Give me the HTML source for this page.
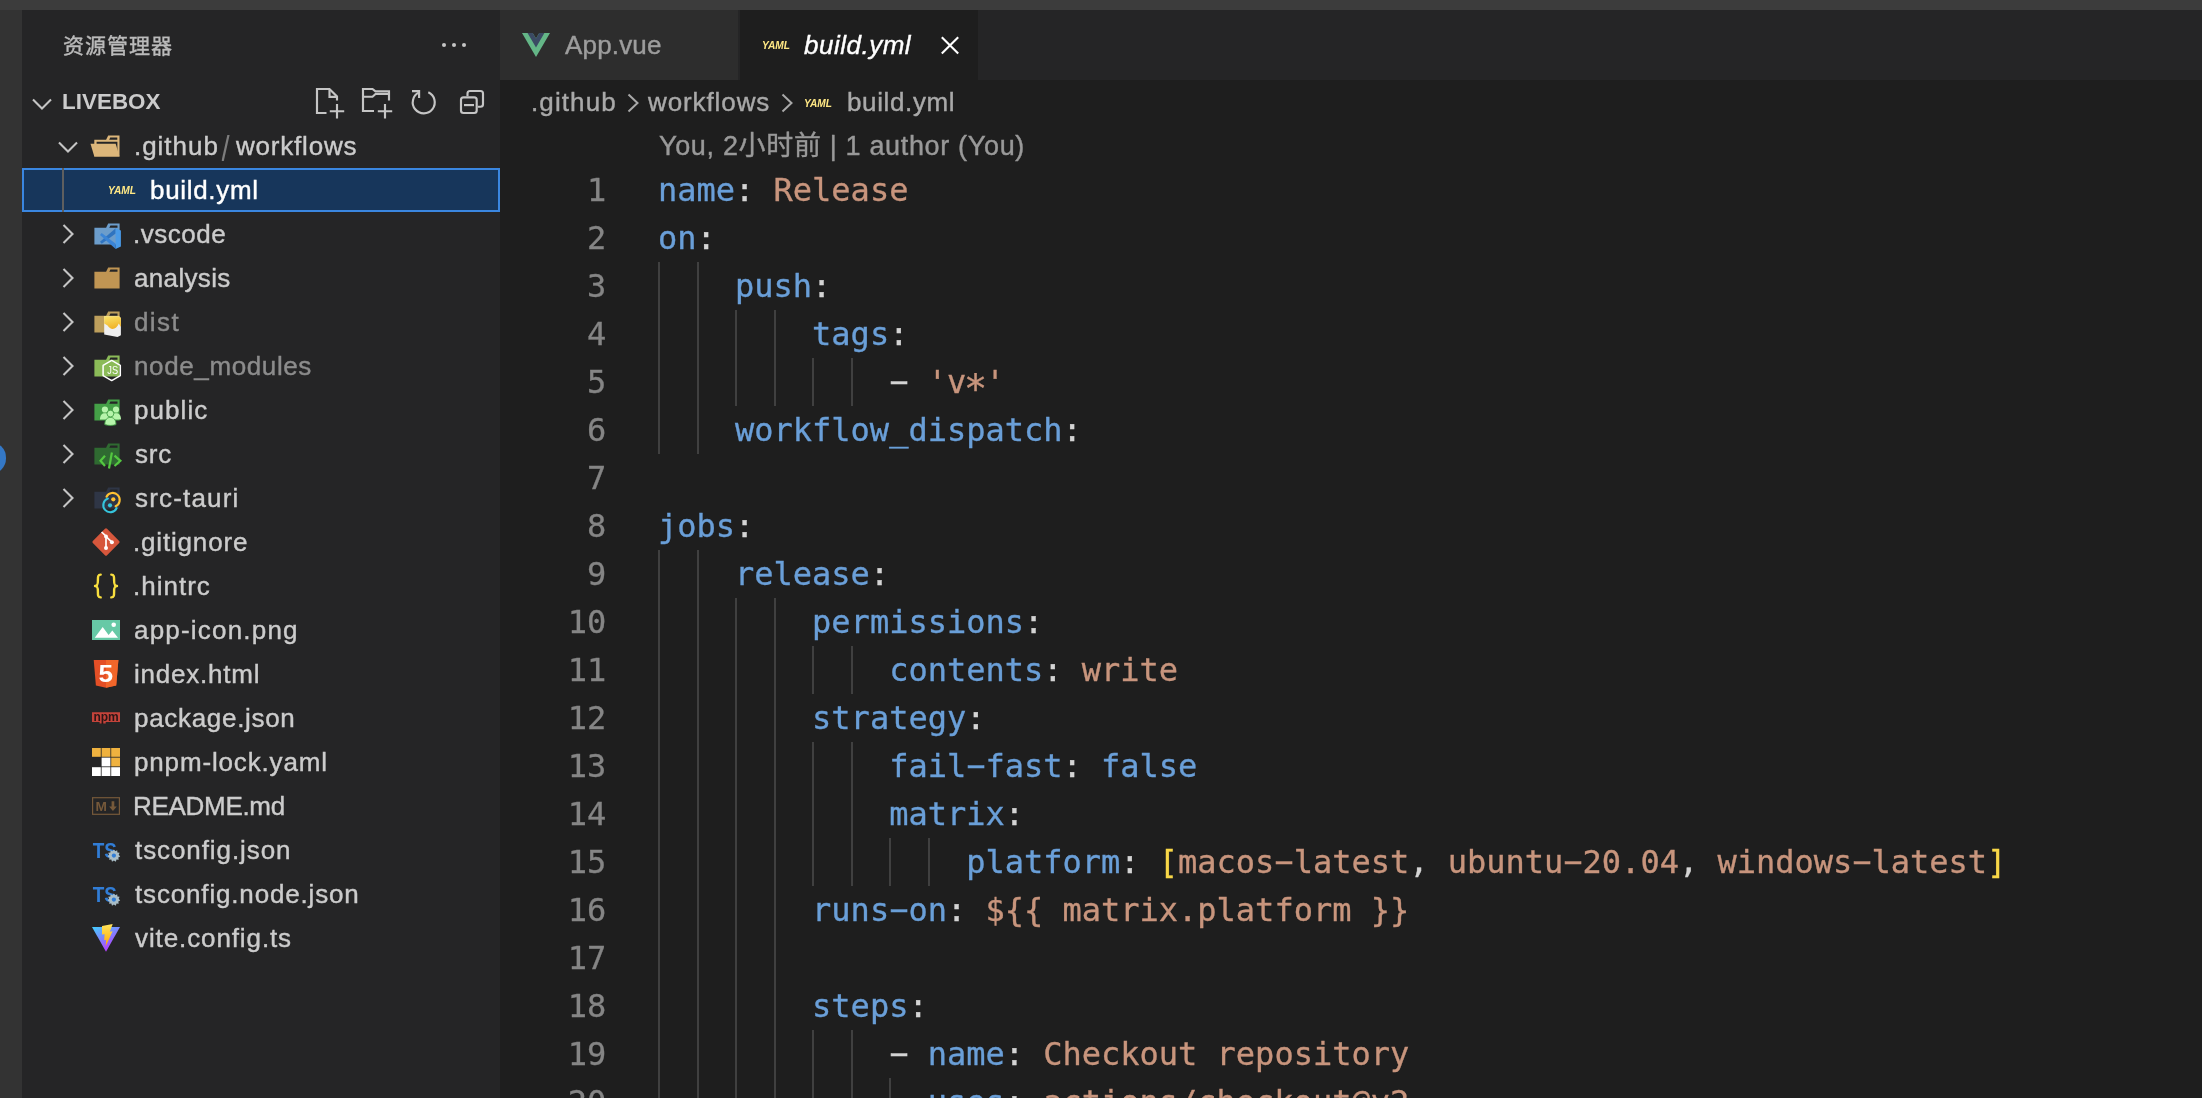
<!DOCTYPE html><html lang="zh-CN"><head><meta charset="utf-8"><title>build.yml — livebox</title><style>
*{box-sizing:border-box}
html,body{margin:0;padding:0}
body{width:2202px;height:1098px;overflow:hidden;position:relative;background:#1e1e1e;font-family:"Liberation Sans","Noto Sans CJK SC",sans-serif;color:#cccccc;-webkit-font-smoothing:antialiased}
.abs{position:absolute}
.t{position:absolute;white-space:pre;line-height:1;will-change:transform;-webkit-text-stroke:0.4px}
.row{position:absolute;left:22px;width:478px;height:44px}
.lbl{-webkit-text-stroke:0.4px;will-change:transform;position:absolute;top:0;height:44px;line-height:44px;font-size:26px;white-space:pre;color:#cccccc}
.dim{color:#8c8c8c}
.ic{will-change:transform;position:absolute;width:32px;height:32px;overflow:visible}
.code{-webkit-text-stroke:0.35px;will-change:transform;position:absolute;left:658px;height:48px;line-height:48px;font-family:"DejaVu Sans Mono","Liberation Mono",monospace;font-size:32px;white-space:pre;color:#d4d4d4;letter-spacing:-0.005px}
.ln{-webkit-text-stroke:0.3px;will-change:transform;position:absolute;left:520px;width:86.3px;height:48px;line-height:48px;text-align:right;font-family:"DejaVu Sans Mono","Liberation Mono",monospace;font-size:32px;color:#858585}
.k{color:#6a9fd8}.s{color:#c8957d}.b{color:#f8d748}.p{color:#d4d4d4}
.h{display:inline-block;transform:translate(0.4px,-0.8px) scaleX(1.95)}.a{display:inline-block;transform:translateY(7.2px) scale(1.2)}
.g{position:absolute;width:2px;background:#404040}
</style></head><body>
<div class="abs" style="left:0;top:0;width:2202px;height:10px;background:#3c3c3c"></div>
<div class="abs" style="left:0;top:10px;width:22px;height:1088px;background:#333333;overflow:hidden"><div class="abs" style="left:-25.2px;top:432.35px;width:31.3px;height:31.3px;border-radius:50%;background:#3478c6"></div></div>
<div class="abs" style="left:22px;top:10px;width:478px;height:1088px;background:#252526"></div>
<div class="abs" style="left:500px;top:10px;width:1702px;height:70px;background:#252526"></div>
<div class="abs" style="left:500px;top:10px;width:238px;height:70px;background:#2d2d2d"></div>
<div class="abs" style="left:740px;top:10px;width:238px;height:70px;background:#1e1e1e"></div>
<div class="t" id="title" style="left:62.500px;top:34.500px;font-size:21px;letter-spacing:1px;color:#bbbbbb;">资源管理器</div>
<svg class="abs" style="left:438px;top:29px" width="32" height="32" viewBox="0 0 32 32"><circle cx="6" cy="16" r="2.050" fill="#c5c5c5"/><circle cx="16" cy="16" r="2.050" fill="#c5c5c5"/><circle cx="26" cy="16" r="2.050" fill="#c5c5c5"/></svg>
<svg class="ic" style="left:26px;top:87.5px" viewBox="0 0 32 32"><polyline points="7,11.500 16,20.500 25,11.500" fill="none" stroke="#c5c5c5" stroke-width="2.100"/></svg>
<div class="t" id="livebox" style="left:62px;top:90.5px;font-size:22.4px;-webkit-text-stroke:0;font-weight:700;color:#cccccc;letter-spacing:0.033px;margin-left:-0.20px;">LIVEBOX</div>
<svg class="abs" style="left:300px;top:76px" width="200" height="52" viewBox="300 76 200 52" fill="none" stroke="#c5c5c5" stroke-width="2.150">
<path d="M326.500,113H317V89H329.500L337,96.500V100.500"/><path d="M329.500,89V96.800H337"/><path d="M337,104V118.500M329.800,111.200H344.200"/>
<path d="M374,111H363V89H372.500L375.500,91.400H389V100.500"/><path d="M363,96.700H372.500L375.500,94H389"/><path d="M385,104V118.500M377.800,111.200H392.200"/>
<path d="M419,92.400A11,11 0 1 0 428.300,92.300"/><path d="M412,91.100H419.100V98"/>
<path d="M467.5,96.3V93.5a2.500,2.500 0 0 1 2.5,-2.5h10.500a2.500,2.500 0 0 1 2.5,2.5v10.700a2.500,2.500 0 0 1 -2.5,2.5H477.800"/><rect x="461" y="97.300" width="15.700" height="15.700" rx="2.500"/><path d="M464,105.100H474"/>
</svg>
<svg class="ic" style="left:52px;top:130.5px" viewBox="0 0 32 32"><polyline points="7,11.500 16,20.500 25,11.500" fill="none" stroke="#c5c5c5" stroke-width="2.100"/></svg>
<svg class="ic" style="left:90px;top:130px" viewBox="0 0 32 32"><path d="M27.4,5.5H18.2L16.1,9.7H4.3V26.5H29.5V5.5Zm0,18.7H6.6V11.8H27.4Zm0-14.5H19.2l1-2.1h7.1V9.7Z" fill="#dcb67a"/><polygon points="25.7 13.7 0.5 13.7 4.3 26.5 29.5 26.5 25.7 13.7" fill="#dcb67a"/></svg>
<div class="lbl" id="r0a" style="left:134px;top:124px;letter-spacing:0.967px;margin-left:-0.20px;">.github</div>
<div class="lbl" id="r0s" style="left:222px;top:128.5px;color:#7d7d7d;-webkit-text-stroke:0;transform:scale(1.12,1.34);transform-origin:50% 63%;">/</div>
<div class="lbl" id="r0b" style="left:234px;top:124px;letter-spacing:0.800px;margin-left:1.60px;">workflows</div>
<div class="abs" style="left:22px;top:168px;width:478px;height:44px;background:#17365b;border:2px solid #3a86e0"></div>
<div class="abs" style="left:62px;top:168px;width:2px;height:44px;background:#5f5f5f"></div>
<svg class="ic" style="left:106px;top:174px" viewBox="0 0 32 32"><text x="2" y="19.8" font-family='"Liberation Sans",sans-serif' font-size="10.6" font-weight="700" font-style="italic" fill="#ffe885" textLength="28" lengthAdjust="spacingAndGlyphs">YAML</text></svg>
<div class="lbl" id="r1" style="left:150px;top:168px;color:#ffffff;letter-spacing:0.675px;margin-left:0.00px;">build.yml</div>
<svg class="ic" style="left:52px;top:218px" viewBox="0 0 32 32"><polyline points="11.500,7 20.500,16 11.500,25" fill="none" stroke="#c5c5c5" stroke-width="2.100"/></svg>
<svg class="ic" style="left:90px;top:218px" viewBox="0 0 32 32"><path d="M27.5,5.5H18.2L16.1,9.7H4.4V26.5H29.6V5.5Zm0,4.2H19.3l1.1-2.1h7.1Z" fill="#6c9dcb"/><polygon points="10,23.7 11.7,25.8 25.7,15.4 25.7,10.2" fill="#2f74c0"/><polygon points="10,17 11.7,14.9 25.7,25.8 25.7,31" fill="#3a84d6"/><polygon points="25.6,10.2 30.9,12.6 30.9,28.4 25.6,31" fill="#4a9be8"/></svg>
<div class="lbl" id="r2" style="left:134px;top:212px;letter-spacing:0.533px;margin-left:-0.80px;">.vscode</div>
<svg class="ic" style="left:52px;top:262px" viewBox="0 0 32 32"><polyline points="11.500,7 20.500,16 11.500,25" fill="none" stroke="#c5c5c5" stroke-width="2.100"/></svg>
<svg class="ic" style="left:90px;top:262px" viewBox="0 0 32 32"><path d="M27.5,5.5H18.2L16.1,9.7H4.4V26.5H29.6V5.5Zm0,4.2H19.3l1.1-2.1h7.1Z" fill="#c09553"/></svg>
<div class="lbl" id="r3" style="left:134px;top:256px;letter-spacing:0.343px;margin-left:-0.20px;">analysis</div>
<svg class="ic" style="left:52px;top:306px" viewBox="0 0 32 32"><polyline points="11.500,7 20.500,16 11.500,25" fill="none" stroke="#c5c5c5" stroke-width="2.100"/></svg>
<svg class="ic" style="left:90px;top:306px" viewBox="0 0 32 32"><path d="M27.5,5.5H18.2L16.1,9.7H4.4V26.5H29.6V5.5Zm0,4.2H19.3l1.1-2.1h7.1Z" fill="#bd9f5c"/><defs><linearGradient id="bagg" x1="0" y1="0" x2="0.3" y2="1"><stop offset="0" stop-color="#fbe56c"/><stop offset="1" stop-color="#f0b429"/></linearGradient></defs><polygon points="14.2,10.2 29,10.2 30.9,12 30.9,29.2 27.5,31 14.2,28.6" fill="#efefef"/><path d="M14.2,10.2H29L30.9,12V21L28.8,17.5C26.5,23.5 21,25 17.6,19.5L14.2,17.4Z" fill="url(#bagg)"/></svg>
<div class="lbl dim" id="r4" style="left:134px;top:300px;letter-spacing:1.400px;margin-left:-0.20px;">dist</div>
<svg class="ic" style="left:52px;top:350px" viewBox="0 0 32 32"><polyline points="11.500,7 20.500,16 11.500,25" fill="none" stroke="#c5c5c5" stroke-width="2.100"/></svg>
<svg class="ic" style="left:90px;top:350px" viewBox="0 0 32 32"><path d="M27.5,5.5H18.2L16.1,9.7H4.4V26.5H29.6V5.5Zm0,4.2H19.3l1.1-2.1h7.1Z" fill="#8bbb58"/><polygon points="21.7,10.4 30.3,15.4 30.3,25.6 21.7,30.6 13.1,25.6 13.1,15.4" fill="none" stroke="#ffffff" stroke-width="1.5" stroke-linejoin="round"/><text x="17.3" y="24.4" font-family='"Liberation Sans",sans-serif' font-size="10.5" font-weight="400" fill="#ffffff" textLength="10.8" lengthAdjust="spacingAndGlyphs">JS</text></svg>
<div class="lbl dim" id="r5" style="left:134px;top:344px;letter-spacing:0.618px;margin-left:0.00px;">node_modules</div>
<svg class="ic" style="left:52px;top:394px" viewBox="0 0 32 32"><polyline points="11.500,7 20.500,16 11.500,25" fill="none" stroke="#c5c5c5" stroke-width="2.100"/></svg>
<svg class="ic" style="left:90px;top:394px" viewBox="0 0 32 32"><path d="M27.5,5.5H18.2L16.1,9.7H4.4V26.5H29.6V5.5Zm0,4.2H19.3l1.1-2.1h7.1Z" fill="#44a047"/><g fill="#b6f5ab"><circle cx="14.9" cy="15.5" r="3.1"/><circle cx="26" cy="15.5" r="3.1"/><path d="M10,25.5c0-4.5,2-6.3,5-6.3s5,1.8,5,6.3z"/><path d="M21,25.5c0-4.5,2-6.3,5-6.3s5,1.8,5,6.3z"/></g><g fill="#b6f5ab" stroke="#44a047" stroke-width="0.9"><circle cx="20.4" cy="19.6" r="3.4"/><path d="M14.8,30.6c0-5,2.3-7.2,5.6-7.2s5.600,2.2,5.6,7.2c-3,1.100-8.2,1.100-11.2,0z"/></g></svg>
<div class="lbl" id="r6" style="left:134px;top:388px;letter-spacing:1.080px;margin-left:0.00px;">public</div>
<svg class="ic" style="left:52px;top:438px" viewBox="0 0 32 32"><polyline points="11.500,7 20.500,16 11.500,25" fill="none" stroke="#c5c5c5" stroke-width="2.100"/></svg>
<svg class="ic" style="left:90px;top:438px" viewBox="0 0 32 32"><path d="M27.5,5.5H18.2L16.1,9.7H4.4V26.5H29.6V5.5Zm0,4.2H19.3l1.1-2.1h7.1Z" fill="#2f6a31"/><g fill="none" stroke="#54c840" stroke-width="2.2"><polyline points="15,17.7 10.5,22.8 15,28"/><polyline points="24.5,17.7 30.4,22.8 24.5,28"/><line x1="21.9" y1="14.5" x2="19" y2="30.5"/></g></svg>
<div class="lbl" id="r7" style="left:134px;top:432px;letter-spacing:0.800px;margin-left:0.80px;">src</div>
<svg class="ic" style="left:52px;top:482px" viewBox="0 0 32 32"><polyline points="11.500,7 20.500,16 11.500,25" fill="none" stroke="#c5c5c5" stroke-width="2.100"/></svg>
<svg class="ic" style="left:90px;top:482px" viewBox="0 0 32 32"><path d="M27.5,5.5H18.2L16.1,9.7H4.4V26.5H29.6V5.5Zm0,4.2H19.3l1.1-2.1h7.1Z" fill="#2f3646"/><g fill="none" stroke-width="2.1" stroke-linecap="round"><path d="M16.5,14.7A7,7 0 1 1 25.6,24.300" stroke="#ffc131"/><path d="M17.9,16.600A7,7 0 1 0 26.600,26.200" stroke="#35c4dc"/></g><circle cx="23.3" cy="17.3" r="2.1" fill="#ffc131"/><circle cx="20" cy="23.3" r="2.1" fill="#35c4dc"/></svg>
<div class="lbl" id="r8" style="left:134px;top:476px;letter-spacing:1.175px;margin-left:0.80px;">src-tauri</div>
<svg class="ic" style="left:90px;top:526px" viewBox="0 0 32 32"><rect x="5.95" y="5.95" width="20.1" height="20.1" rx="1.5" transform="rotate(45 16 16)" fill="#d6573c"/><g stroke="#ffffff" stroke-width="1.7" fill="none"><line x1="11.6" y1="6" x2="16" y2="10.2"/><line x1="16" y1="10.2" x2="16" y2="21.9"/><line x1="16" y1="10.6" x2="21.9" y2="16.2"/></g><circle cx="16" cy="10.400" r="1.9" fill="#ffffff"/><circle cx="16" cy="21.9" r="2" fill="#ffffff"/><circle cx="21.9" cy="16.2" r="2" fill="#ffffff"/></svg>
<div class="lbl" id="r9" style="left:134px;top:520px;letter-spacing:0.822px;margin-left:-0.80px;">.gitignore</div>
<svg class="ic" style="left:90px;top:570px" viewBox="0 0 32 32"><g fill="none" stroke="#f8de3e" stroke-width="2.4" stroke-linecap="round" stroke-linejoin="round"><path d="M10.7,4.6C7.7,4.6,7.9,7,7.9,10.5S7.7,16,5,16C7.7,16,7.9,18,7.9,21.500S7.7,27.400,10.7,27.4"/><path d="M21.3,4.6C24.3,4.6,24.1,7,24.1,10.5S24.3,16,27,16C24.3,16,24.1,18,24.1,21.500S24.3,27.400,21.300,27.4"/></g></svg>
<div class="lbl" id="r10" style="left:134px;top:564px;letter-spacing:1.000px;margin-left:-0.80px;">.hintrc</div>
<svg class="ic" style="left:90px;top:614px" viewBox="0 0 32 32"><rect x="2" y="6" width="28" height="20" fill="#67c9a6"/><polygon points="4.7,23.8 12.7,12.9 18.6,21 22.3,16.6 28,23.8" fill="#ffffff"/><circle cx="23.7" cy="10.7" r="2.3" fill="#ffffff"/></svg>
<div class="lbl" id="r11" style="left:134px;top:608px;letter-spacing:1.200px;margin-left:-0.20px;">app-icon.png</div>
<svg class="ic" style="left:90px;top:658px" viewBox="0 0 32 32"><polygon points="3.7,2 28.4,2 26.2,27.400 16,29.8 5.9,27.4" fill="#e44f26"/><polygon points="16,2 28.4,2 26.2,27.4 16,29.8" fill="#f1662a"/><text x="8.5" y="23.6" font-family='"Liberation Sans",sans-serif' font-size="23.5" font-weight="700" fill="#ffffff" textLength="14.6" lengthAdjust="spacingAndGlyphs">5</text></svg>
<div class="lbl" id="r12" style="left:134px;top:652px;letter-spacing:0.778px;margin-left:0.40px;">index.html</div>
<svg class="ic" style="left:90px;top:702px" viewBox="0 0 32 32"><path d="M2,10.2H30V19.900H15.7V21.5H9.6V19.900H2Z" fill="#c4433a"/><text x="3.4" y="18.7" font-family='"Liberation Sans",sans-serif' font-size="13.5" font-weight="700" fill="#2a1616" textLength="25.3" lengthAdjust="spacingAndGlyphs">npm</text></svg>
<div class="lbl" id="r13" style="left:134px;top:696px;letter-spacing:0.691px;margin-left:0.00px;">package.json</div>
<svg class="ic" style="left:90px;top:746px" viewBox="0 0 32 32"><rect x="2" y="2" width="8.8" height="8.8" fill="#efb23f"/><rect x="11.6" y="2" width="8.8" height="8.8" fill="#efb23f"/><rect x="21.2" y="2" width="8.8" height="8.8" fill="#efb23f"/><rect x="21.2" y="11.6" width="8.8" height="8.8" fill="#efb23f"/><rect x="11.6" y="11.6" width="8.8" height="8.8" fill="#ffffff"/><rect x="2" y="21.2" width="8.8" height="8.8" fill="#ffffff"/><rect x="11.6" y="21.2" width="8.8" height="8.8" fill="#ffffff"/><rect x="21.2" y="21.2" width="8.8" height="8.8" fill="#ffffff"/></svg>
<div class="lbl" id="r14" style="left:134px;top:740px;letter-spacing:0.846px;margin-left:0.00px;">pnpm-lock.yaml</div>
<svg class="ic" style="left:90px;top:790px" viewBox="0 0 32 32"><rect x="2.6" y="7.7" width="26.8" height="16.6" fill="none" stroke="#76593a" stroke-width="1.2"/><text x="5.6" y="21" font-family='"Liberation Sans",sans-serif' font-size="13.7" font-weight="700" fill="#76593a" textLength="11.4" lengthAdjust="spacingAndGlyphs">M</text><path d="M21.6,11.2h2.7v5.2h2.5l-3.85,4.7l-3.85,-4.7h2.5z" fill="#76593a"/></svg>
<div class="lbl" id="r15" style="left:134px;top:784px;letter-spacing:-0.300px;margin-left:-0.80px;">README.md</div>
<svg class="ic" style="left:90px;top:834px" viewBox="0 0 32 32"><text x="2.7" y="24.3" font-family='"Liberation Sans",sans-serif' font-size="22.6" font-weight="700" fill="#317dd6" textLength="24.2" lengthAdjust="spacingAndGlyphs">TS</text><g transform="translate(23.9 21.6)"><path d="M0,-6.2 L1.3,-4.4 L3.3,-5.3 L3.5,-3.1 L5.7,-2.8 L4.8,-0.8 L6.3,0.8 L4.4,1.9 L4.8,4.1 L2.6,4 L1.900,6.100 L0,5 L-1.9,6.1 L-2.6,4 L-4.8,4.1 L-4.4,1.9 L-6.3,0.8 L-4.8,-0.8 L-5.7,-2.8 L-3.5,-3.1 L-3.3,-5.3 L-1.3,-4.4Z" fill="#a9bdc7"/><circle r="2.1" fill="#317dd6"/></g></svg>
<div class="lbl" id="r16" style="left:134px;top:828px;letter-spacing:0.917px;margin-left:0.80px;">tsconfig.json</div>
<svg class="ic" style="left:90px;top:878px" viewBox="0 0 32 32"><text x="2.7" y="24.3" font-family='"Liberation Sans",sans-serif' font-size="22.6" font-weight="700" fill="#317dd6" textLength="24.2" lengthAdjust="spacingAndGlyphs">TS</text><g transform="translate(23.9 21.6)"><path d="M0,-6.2 L1.3,-4.4 L3.3,-5.3 L3.5,-3.1 L5.7,-2.8 L4.8,-0.8 L6.3,0.8 L4.4,1.9 L4.8,4.1 L2.6,4 L1.900,6.100 L0,5 L-1.9,6.1 L-2.6,4 L-4.8,4.1 L-4.4,1.9 L-6.3,0.8 L-4.8,-0.8 L-5.7,-2.8 L-3.5,-3.1 L-3.3,-5.3 L-1.3,-4.4Z" fill="#a9bdc7"/><circle r="2.1" fill="#317dd6"/></g></svg>
<div class="lbl" id="r17" style="left:134px;top:872px;letter-spacing:0.835px;margin-left:0.80px;">tsconfig.node.json</div>
<svg class="ic" style="left:90px;top:922px" viewBox="0 0 32 32"><defs><linearGradient id="vg1" x1="0" y1="0" x2="0.6" y2="1"><stop offset="0" stop-color="#41d1ff"/><stop offset="1" stop-color="#bd34fe"/></linearGradient><linearGradient id="vg2" x1="0" y1="0" x2="0" y2="1"><stop offset="0" stop-color="#ffe45c"/><stop offset="1" stop-color="#ffa800"/></linearGradient></defs><polygon points="2,5 30,5 16,29.8" fill="url(#vg1)"/><polygon points="22.7,2 12,4 12,12.6 14.6,12.2 14.2,18.2 16.2,17.8 15.6,24.5 22.6,9.2 19.8,9.7" fill="url(#vg2)"/></svg>
<div class="lbl" id="r18" style="left:134px;top:916px;letter-spacing:0.892px;margin-left:0.80px;">vite.config.ts</div>
<svg class="ic" style="left:520px;top:29px" viewBox="0 0 32 32"><path d="M24.4,3.925H30L16,28.075,2,3.925H12.71L16,9.525l3.22-5.6Z" fill="#64b687"/><path d="M7.53,3.925,16,18.485l8.4-14.56H19.22L16,9.525l-3.29-5.6Z" fill="#3b4a63"/></svg>
<div class="t" id="tab1" style="left:564px;top:32px;font-size:26px;color:#9d9d9d;letter-spacing:0.167px;margin-left:1.00px;">App.vue</div>
<svg class="ic" style="left:760px;top:29px" viewBox="0 0 32 32"><text x="2" y="19.8" font-family='"Liberation Sans",sans-serif' font-size="10.6" font-weight="700" font-style="italic" fill="#ffe885" textLength="28" lengthAdjust="spacingAndGlyphs">YAML</text></svg>
<div class="t" id="tab2" style="left:803px;top:32px;font-size:26px;font-style:italic;color:#ffffff;letter-spacing:0.500px;margin-left:1.00px;">build.yml</div>
<svg class="abs" style="left:934px;top:29px" width="32" height="32" viewBox="0 0 32 32"><path d="M7.800,8.200L24.200,24.600M24.200,8.200L7.800,24.600" stroke="#ffffff" stroke-width="2.100" fill="none"/></svg>
<div class="t" id="bc1" style="left:532px;top:89px;font-size:26px;color:#a9a9a9;letter-spacing:1.100px;margin-left:-0.60px;">.github</div>
<svg class="abs" style="left:617px;top:86.500px" width="32" height="32" viewBox="0 0 32 32"><polyline points="11.500,7.500 20.500,16 11.500,24.500" fill="none" stroke="#a9a9a9" stroke-width="2"/></svg>
<div class="t" id="bc2" style="left:648px;top:89px;font-size:26px;color:#a9a9a9;letter-spacing:0.900px;margin-left:0.40px;">workflows</div>
<svg class="abs" style="left:771px;top:86.500px" width="32" height="32" viewBox="0 0 32 32"><polyline points="11.500,7.500 20.500,16 11.500,24.500" fill="none" stroke="#a9a9a9" stroke-width="2"/></svg>
<svg class="ic" style="left:802px;top:87px" viewBox="0 0 32 32"><text x="2" y="19.8" font-family='"Liberation Sans",sans-serif' font-size="10.6" font-weight="700" font-style="italic" fill="#ffe885" textLength="28" lengthAdjust="spacingAndGlyphs">YAML</text></svg>
<div class="t" id="bc3" style="left:846px;top:89px;font-size:26px;color:#a9a9a9;letter-spacing:0.625px;margin-left:0.60px;">build.yml</div>
<div class="t" id="lens" style="left:658px;top:133px;font-size:27px;color:#999999;letter-spacing:0.664px;margin-left:1.40px;">You, 2小时前 | 1 author (You)</div>
<div class="ln" style="top:166px">1</div>
<div class="code" style="top:166px"><span class="k">name</span>: <span class="s">Release</span></div>
<div class="ln" style="top:214px">2</div>
<div class="code" style="top:214px"><span class="k">on</span>:</div>
<div class="ln" style="top:262px">3</div>
<div class="g" style="left:658.00px;top:262px;height:48px"></div>
<div class="g" style="left:696.53px;top:262px;height:48px"></div>
<div class="code" style="top:262px">    <span class="k">push</span>:</div>
<div class="ln" style="top:310px">4</div>
<div class="g" style="left:658.00px;top:310px;height:48px"></div>
<div class="g" style="left:696.53px;top:310px;height:48px"></div>
<div class="g" style="left:735.06px;top:310px;height:48px"></div>
<div class="g" style="left:773.60px;top:310px;height:48px"></div>
<div class="code" style="top:310px">        <span class="k">tags</span>:</div>
<div class="ln" style="top:358px">5</div>
<div class="g" style="left:658.00px;top:358px;height:48px"></div>
<div class="g" style="left:696.53px;top:358px;height:48px"></div>
<div class="g" style="left:735.06px;top:358px;height:48px"></div>
<div class="g" style="left:773.60px;top:358px;height:48px"></div>
<div class="g" style="left:812.13px;top:358px;height:48px"></div>
<div class="g" style="left:850.66px;top:358px;height:48px"></div>
<div class="code" style="top:358px">            <span class="h">-</span> <span class="s">&#x27;v<span class="a">*</span>&#x27;</span></div>
<div class="ln" style="top:406px">6</div>
<div class="g" style="left:658.00px;top:406px;height:48px"></div>
<div class="g" style="left:696.53px;top:406px;height:48px"></div>
<div class="code" style="top:406px">    <span class="k">workflow_dispatch</span>:</div>
<div class="ln" style="top:454px">7</div>
<div class="ln" style="top:502px">8</div>
<div class="code" style="top:502px"><span class="k">jobs</span>:</div>
<div class="ln" style="top:550px">9</div>
<div class="g" style="left:658.00px;top:550px;height:48px"></div>
<div class="g" style="left:696.53px;top:550px;height:48px"></div>
<div class="code" style="top:550px">    <span class="k">release</span>:</div>
<div class="ln" style="top:598px">10</div>
<div class="g" style="left:658.00px;top:598px;height:48px"></div>
<div class="g" style="left:696.53px;top:598px;height:48px"></div>
<div class="g" style="left:735.06px;top:598px;height:48px"></div>
<div class="g" style="left:773.60px;top:598px;height:48px"></div>
<div class="code" style="top:598px">        <span class="k">permissions</span>:</div>
<div class="ln" style="top:646px">11</div>
<div class="g" style="left:658.00px;top:646px;height:48px"></div>
<div class="g" style="left:696.53px;top:646px;height:48px"></div>
<div class="g" style="left:735.06px;top:646px;height:48px"></div>
<div class="g" style="left:773.60px;top:646px;height:48px"></div>
<div class="g" style="left:812.13px;top:646px;height:48px"></div>
<div class="g" style="left:850.66px;top:646px;height:48px"></div>
<div class="code" style="top:646px">            <span class="k">contents</span>: <span class="s">write</span></div>
<div class="ln" style="top:694px">12</div>
<div class="g" style="left:658.00px;top:694px;height:48px"></div>
<div class="g" style="left:696.53px;top:694px;height:48px"></div>
<div class="g" style="left:735.06px;top:694px;height:48px"></div>
<div class="g" style="left:773.60px;top:694px;height:48px"></div>
<div class="code" style="top:694px">        <span class="k">strategy</span>:</div>
<div class="ln" style="top:742px">13</div>
<div class="g" style="left:658.00px;top:742px;height:48px"></div>
<div class="g" style="left:696.53px;top:742px;height:48px"></div>
<div class="g" style="left:735.06px;top:742px;height:48px"></div>
<div class="g" style="left:773.60px;top:742px;height:48px"></div>
<div class="g" style="left:812.13px;top:742px;height:48px"></div>
<div class="g" style="left:850.66px;top:742px;height:48px"></div>
<div class="code" style="top:742px">            <span class="k">fail<span class="h">-</span>fast</span>: <span class="k">false</span></div>
<div class="ln" style="top:790px">14</div>
<div class="g" style="left:658.00px;top:790px;height:48px"></div>
<div class="g" style="left:696.53px;top:790px;height:48px"></div>
<div class="g" style="left:735.06px;top:790px;height:48px"></div>
<div class="g" style="left:773.60px;top:790px;height:48px"></div>
<div class="g" style="left:812.13px;top:790px;height:48px"></div>
<div class="g" style="left:850.66px;top:790px;height:48px"></div>
<div class="code" style="top:790px">            <span class="k">matrix</span>:</div>
<div class="ln" style="top:838px">15</div>
<div class="g" style="left:658.00px;top:838px;height:48px"></div>
<div class="g" style="left:696.53px;top:838px;height:48px"></div>
<div class="g" style="left:735.06px;top:838px;height:48px"></div>
<div class="g" style="left:773.60px;top:838px;height:48px"></div>
<div class="g" style="left:812.13px;top:838px;height:48px"></div>
<div class="g" style="left:850.66px;top:838px;height:48px"></div>
<div class="g" style="left:889.19px;top:838px;height:48px"></div>
<div class="g" style="left:927.72px;top:838px;height:48px"></div>
<div class="code" style="top:838px">                <span class="k">platform</span>: <span class="b">[</span><span class="s">macos<span class="h">-</span>latest</span>, <span class="s">ubuntu<span class="h">-</span>20.04</span>, <span class="s">windows<span class="h">-</span>latest</span><span class="b">]</span></div>
<div class="ln" style="top:886px">16</div>
<div class="g" style="left:658.00px;top:886px;height:48px"></div>
<div class="g" style="left:696.53px;top:886px;height:48px"></div>
<div class="g" style="left:735.06px;top:886px;height:48px"></div>
<div class="g" style="left:773.60px;top:886px;height:48px"></div>
<div class="code" style="top:886px">        <span class="k">runs<span class="h">-</span>on</span>: <span class="s">${{ matrix.platform }}</span></div>
<div class="ln" style="top:934px">17</div>
<div class="g" style="left:658.00px;top:934px;height:48px"></div>
<div class="g" style="left:696.53px;top:934px;height:48px"></div>
<div class="g" style="left:735.06px;top:934px;height:48px"></div>
<div class="g" style="left:773.60px;top:934px;height:48px"></div>
<div class="ln" style="top:982px">18</div>
<div class="g" style="left:658.00px;top:982px;height:48px"></div>
<div class="g" style="left:696.53px;top:982px;height:48px"></div>
<div class="g" style="left:735.06px;top:982px;height:48px"></div>
<div class="g" style="left:773.60px;top:982px;height:48px"></div>
<div class="code" style="top:982px">        <span class="k">steps</span>:</div>
<div class="ln" style="top:1030px">19</div>
<div class="g" style="left:658.00px;top:1030px;height:48px"></div>
<div class="g" style="left:696.53px;top:1030px;height:48px"></div>
<div class="g" style="left:735.06px;top:1030px;height:48px"></div>
<div class="g" style="left:773.60px;top:1030px;height:48px"></div>
<div class="g" style="left:812.13px;top:1030px;height:48px"></div>
<div class="g" style="left:850.66px;top:1030px;height:48px"></div>
<div class="code" style="top:1030px">            <span class="h">-</span> <span class="k">name</span>: <span class="s">Checkout repository</span></div>
<div class="ln" style="top:1078px">20</div>
<div class="g" style="left:658.00px;top:1078px;height:48px"></div>
<div class="g" style="left:696.53px;top:1078px;height:48px"></div>
<div class="g" style="left:735.06px;top:1078px;height:48px"></div>
<div class="g" style="left:773.60px;top:1078px;height:48px"></div>
<div class="g" style="left:812.13px;top:1078px;height:48px"></div>
<div class="g" style="left:850.66px;top:1078px;height:48px"></div>
<div class="g" style="left:889.19px;top:1078px;height:48px"></div>
<div class="code" style="top:1078px">              <span class="k">uses</span>: <span class="s">actions/checkout@v2</span></div>
</body></html>
